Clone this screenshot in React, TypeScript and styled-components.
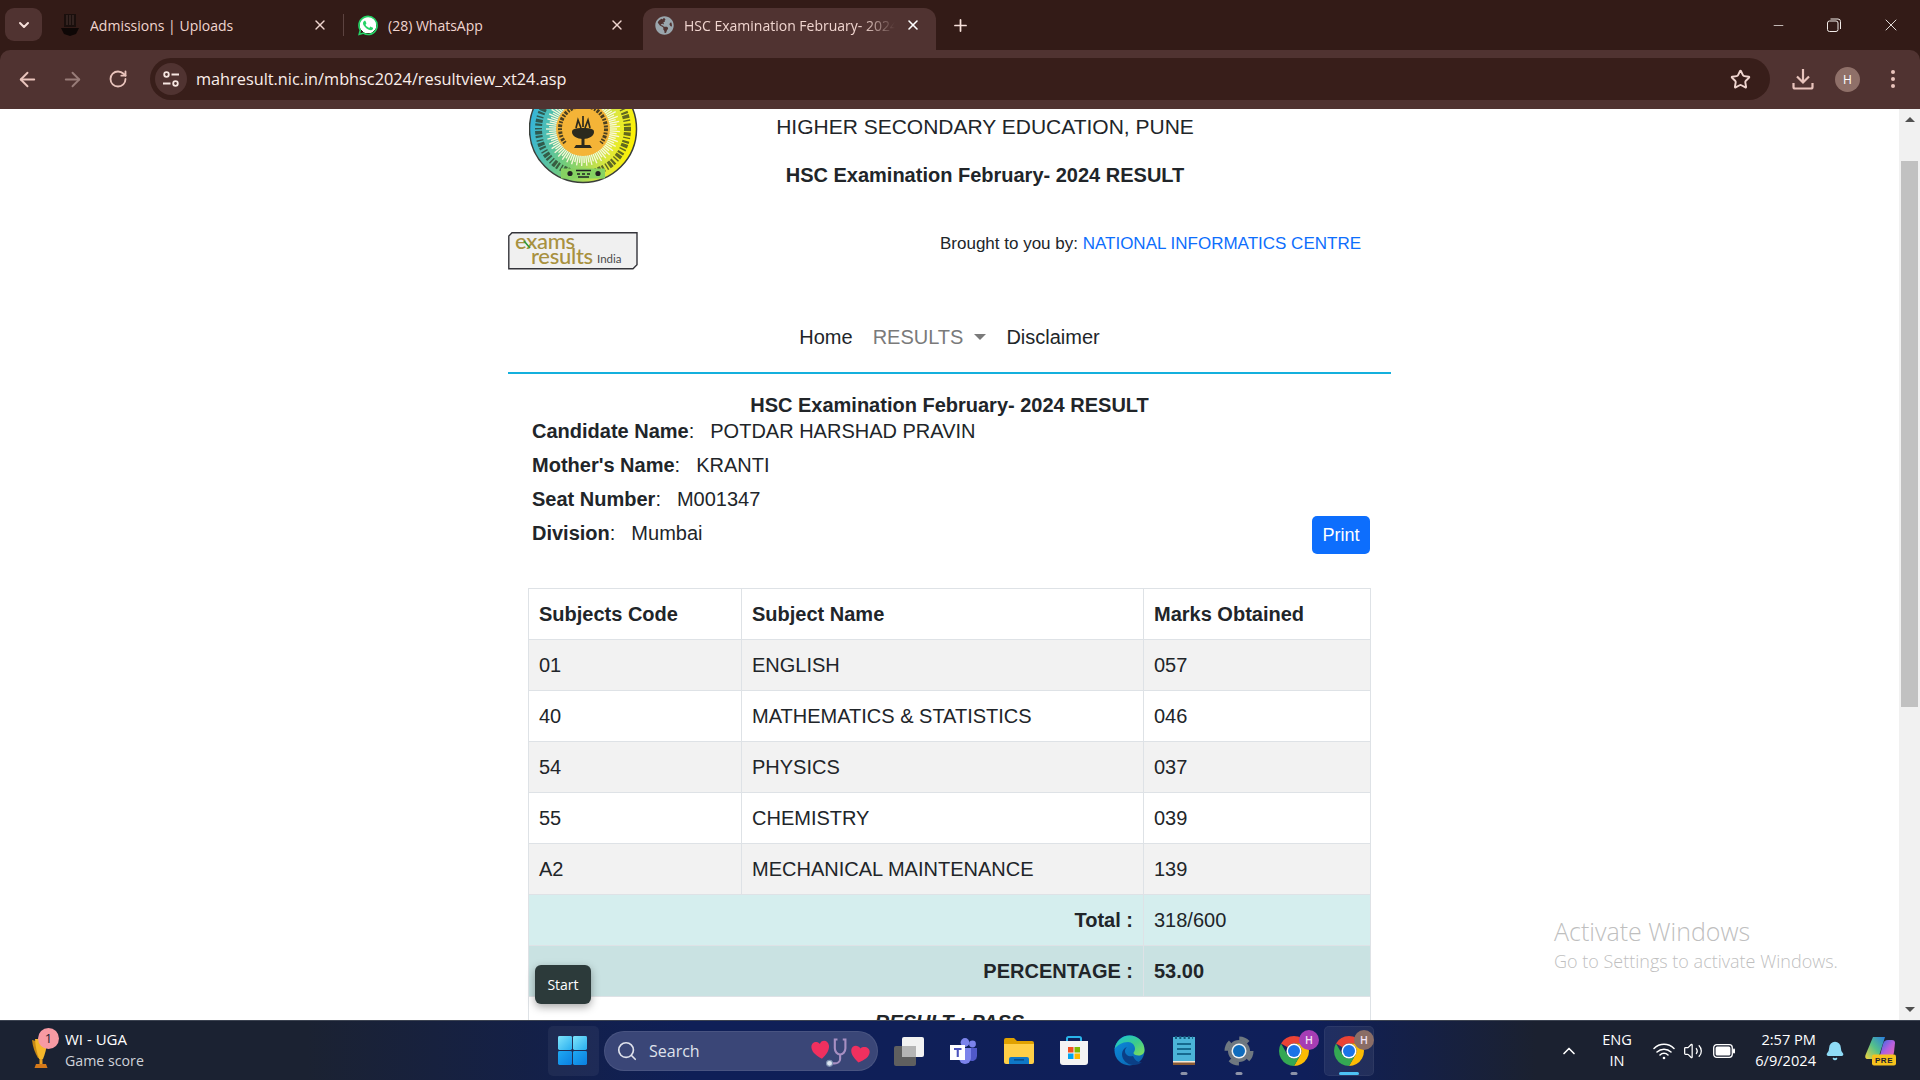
import React from 'react';
import styled, { createGlobalStyle } from 'styled-components';
import { ArrowLeft, ArrowRight, RotateCw, Star, X, Plus, ChevronDown, ChevronUp, Search, Minus, Bell, Volume2 } from 'lucide-react';
import { SiWhatsapp } from 'react-icons/si';
import { FaGlobeAmericas } from 'react-icons/fa';

const Global = createGlobalStyle`
  html, body { margin: 0; padding: 0; overflow: hidden; background: #fff; }
  * { box-sizing: border-box; }
`;

const Screen = styled.div`
  width: 1920px; height: 1080px; display: flex; flex-direction: column; overflow: hidden; background: #331b17;
  font-family: "Liberation Sans", Arial, sans-serif; color: #212529;
`;

/* ---------- browser chrome ---------- */
const TabStrip = styled.div`
  height: 50px; flex: none; display: flex; align-items: flex-end; background: #331b17; padding-left: 5px;
  font-family: "Open Sans", "Noto Sans", sans-serif; color: #f0d5cf;
`;
const TabMenu = styled.div`
  width: 37px; height: 33px; margin: 0 6px 9px 0; border-radius: 9px; background: #503331;
  display: flex; align-items: center; justify-content: center; color: #f6e0da;
`;
const Tab = styled.div<{ $w: number; $pad: number; $active?: boolean; $sep?: boolean }>`
  position: relative; width: ${p => p.$w}px; height: 42px; padding: 0 15px 8px ${p => p.$pad}px; flex: none;
  display: flex; align-items: center; gap: 10px; font-size: 14px;
  margin-left: ${p => (p.$active ? 3 : 0)}px;
  border-radius: 12px 12px 0 0;
  background: ${p => (p.$active ? '#503331' : 'transparent')};
  &::before {
    content: ${p => (p.$sep ? '""' : 'none')}; position: absolute; left: 0; top: 6px; width: 1px; height: 22px; background: #5c4340;
  }
`;
const TabTitle = styled.span<{ $fade?: boolean }>`
  flex: 1; min-width: 0; white-space: nowrap; overflow: hidden;
  ${p => p.$fade && 'mask-image: linear-gradient(90deg,#000 85%,transparent 100%);'}
`;
const FavStack = styled.span`
  width: 20px; height: 20px; flex: none; display: inline-flex; align-items: center; justify-content: center; color: #25d366;
  background: radial-gradient(circle, #fff 58%, transparent 60%);
  border-radius: 50%;
`;
const NewTab = styled.div`
  width: 36px; height: 42px; margin-left: 6px; padding-bottom: 8px; display: flex; align-items: center; justify-content: center; color: #f6e0da;
`;
const WinButtons = styled.div`
  margin-left: auto; height: 50px; display: flex; color: #f2ece9;
`;
const WinBtn = styled.div<{ $w: number }>`
  width: ${p => p.$w}px; display: flex; align-items: center; justify-content: center;
`;
const Toolbar = styled.div`
  height: 59px; flex: none; display: flex; align-items: flex-start; padding: 8px 5px 0; background: #503331;
  border-radius: 10px 10px 0 0; color: #e9c4bc;
`;
const ToolBtn = styled.div`
  width: 45px; height: 42px; flex: none; display: flex; align-items: center; justify-content: center;
`;
const DimBtn = styled(ToolBtn)` color: #987c78; `;
const UrlBar = styled.div`
  width: 1620px; height: 42px; margin: 0 10px; flex: none; border-radius: 21px; background: #381e1a;
  display: flex; align-items: center; padding: 0 19px 0 5px;
  font-family: "Open Sans", "Noto Sans", sans-serif; font-size: 16.3px; color: #fbeeea;
`;
const SiteInfo = styled.div`
  width: 32px; height: 32px; border-radius: 50%; background: #503331; flex: none; margin-right: 9px;
  display: flex; align-items: center; justify-content: center;
`;
const UrlText = styled.span` flex: 1; `;
const Avatar = styled.div`
  width: 25px; height: 25px; border-radius: 50%; background: #8f7069; color: #fff; font-size: 12px;
  display: flex; align-items: center; justify-content: center; font-family: "Open Sans", sans-serif;
`;

/* ---------- page ---------- */
const Viewport = styled.div`
  position: relative; flex: 1; min-height: 0; display: flex; background: #fff;
`;
const PageScroll = styled.div`
  flex: 1; min-width: 0; overflow: hidden; padding-left: 508px;
`;
const Container = styled.div`
  width: 883px; font-size: 20px; line-height: 30px;
`;
const HeadRow = styled.div`
  display: grid; grid-template-columns: 21px 129px 654px; height: 120px;
`;
const Seal = styled.svg` grid-column: 2; display: block; `;
const HeadText = styled.div`
  grid-column: 3; text-align: center; padding-top: 3px; display: flex; flex-direction: column; gap: 18px;
`;
const HeadLine = styled.div` font-size: 21px; `;
const Strong = styled.b` font-weight: 700; `;
const SourceRow = styled.div`
  display: flex; justify-content: space-between; align-items: flex-start; padding-right: 30px; height: 93px;
`;
const ExamsLogo = styled.svg` display: block; margin-top: 3px; `;
const Brought = styled.span` font-size: 17px; `;
const Link = styled.span` color: #0d6efd; `;
const Nav = styled.nav`
  display: flex; justify-content: center; gap: 20px; height: 52px; border-bottom: 2px solid #14b0dd;
`;
const NavItem = styled.span<{ $muted?: boolean }>`
  color: ${p => (p.$muted ? '#7a7a7a' : '#212529')}; display: inline-flex; align-items: center; height: 30px; gap: 11px;
`;
const Caret = styled.i`
  width: 0; height: 0; border-left: 6px solid transparent; border-right: 6px solid transparent; border-top: 6px solid #7a7a7a;
`;
const ResultTitle = styled.div`
  text-align: center; font-weight: 700; line-height: 18px; height: 40px; padding-top: 22px;
`;
const InfoBlock = styled.div`
  display: flex; justify-content: space-between; align-items: flex-end; padding: 0 21px 0 24px;
`;
const InfoList = styled.div` display: flex; flex-direction: column; `;
const InfoRow = styled.div` line-height: 34px; height: 34px; `;
const InfoValue = styled.span` margin-left: 16px; `;
const PrintBtn = styled.button`
  width: 58px; height: 38px; border: 0; border-radius: 5px; background: #0d6efd; color: #fff; margin-bottom: -4px;
  font: 18px "Liberation Sans", Arial, sans-serif; padding: 0;
`;
const Results = styled.table`
  width: 842px; margin: 38px 0 0 20px; border-collapse: collapse; table-layout: fixed;
`;
const Row = styled.tr<{ $bg?: string }>`
  background: ${p => p.$bg || '#fff'}; height: 51px;
`;
const Cell = styled.td<{ $right?: boolean; $bold?: boolean; $center?: boolean; $italic?: boolean }>`
  border: 1px solid #dee2e6; padding: 10px; line-height: 30px;
  text-align: ${p => (p.$right ? 'right' : p.$center ? 'center' : 'left')};
  font-weight: ${p => (p.$bold ? 700 : 400)};
  font-style: ${p => (p.$italic ? 'italic' : 'normal')};
`;
const Scrollbar = styled.div`
  width: 21px; flex: none; background: #f1f1f1; display: flex; flex-direction: column; align-items: center;
`;
const ArrowBox = styled.div`
  width: 21px; height: 21px; flex: none; display: flex; align-items: center; justify-content: center;
`;
const ArrowUp = styled.i`
  width: 0; height: 0; border-left: 5px solid transparent; border-right: 5px solid transparent; border-bottom: 5px solid #505050;
`;
const ArrowDown = styled.i`
  width: 0; height: 0; border-left: 5px solid transparent; border-right: 5px solid transparent; border-top: 5px solid #505050;
`;
const Thumb = styled.div`
  width: 17px; height: 546px; margin-top: 31px; background: #c1c1c1; flex: none;
`;
const Spacer = styled.div` flex: 1; `;
const StartTip = styled.div`
  position: absolute; left: 535px; top: 856px; width: 56px; height: 39px; border-radius: 6px; background: #2c3a3a; color: #fff;
  font: 14px "Open Sans", sans-serif; display: flex; align-items: center; justify-content: center;
  box-shadow: 0 3px 8px rgba(0,0,0,.35);
`;
const Activate = styled.div`
  position: absolute; left: 1554px; top: 804px; color: #bfbfbf; font-family: "Open Sans", sans-serif; font-weight: 300;
`;
const ActivateHead = styled.div` font-size: 25px; line-height: 36px; `;
const ActivateSub = styled.div` font-size: 18px; line-height: 24px; `;

/* ---------- taskbar ---------- */
const Taskbar = styled.div`
  height: 60px; flex: none; display: flex; align-items: center; border-top: 1px solid #3c4351; color: #fff;
  background: linear-gradient(90deg,#1b2232 0,#1b2232 16%,#0f1f57 36%,#0f1f5a 68%,#1b2130 80%,#1b2130 100%);
  font-family: "Open Sans", "Noto Sans", sans-serif;
`;
const Widget = styled.div`
  width: 548px; flex: none; display: flex; align-items: center; padding: 0 0 2px 30px; gap: 2px;
`;
const Trophy = styled.span` position: relative; width: 33px; height: 38px; display: flex; align-items: flex-end; padding-left: 2px; `;
const TrophyBadge = styled.span`
  position: absolute; left: 8px; top: -3px; width: 21px; height: 21px; border-radius: 50%; background: #f79aa3; color: #1b2232;
  font-size: 13px; display: flex; align-items: center; justify-content: center;
`;
const WidgetText = styled.div` display: flex; flex-direction: column; line-height: 21px; `;
const WidgetHead = styled.span` font-size: 15px; `;
const WidgetSub = styled.span` font-size: 14.2px; color: #cfd2d9; `;
const TaskTile = styled.div<{ $on?: boolean; $dot?: string; $dotW?: number }>`
  position: relative; width: 50px; height: 50px; flex: none; border-radius: 5px; display: flex; align-items: center; justify-content: center;
  background: ${p => (p.$on ? 'rgba(255,255,255,.07)' : 'transparent')};
  box-shadow: ${p => (p.$on ? 'inset 0 0 0 1px rgba(255,255,255,.05)' : 'none')};
  &::after {
    content: ${p => (p.$dot ? '""' : 'none')}; position: absolute; left: 50%; transform: translateX(-50%); bottom: 1px;
    width: ${p => p.$dotW || 7}px; height: 3px; border-radius: 2px; background: ${p => p.$dot};
  }
`;
const StartTile = styled(TaskTile)` margin-right: 5px; background: rgba(255,255,255,.05); width: 51px; padding-right: 2px; `;
const SearchPill = styled.div`
  width: 274px; height: 40px; flex: none; margin-right: 6px; border-radius: 20px; display: flex; align-items: center; padding: 0 6px 0 11px; gap: 11px;
  background: #3a4677; border: 1px solid rgba(255,255,255,.08); color: #dfe2ec; font-size: 16px; 
`;
const SearchLabel = styled.span` flex: 1; `;
const TileRow = styled.div` display: flex; gap: 5px; flex: none; `;
const ChromeBadge = styled.span<{ $bg: string }>`
  position: absolute; right: 0; top: 4px; width: 20px; height: 20px; border-radius: 50%; background: ${p => p.$bg};
  font-size: 10.5px; font-weight: 600; display: flex; align-items: center; justify-content: center; color: #f3e3f5;
`;
const Tray = styled.div`
  flex: 1; display: flex; align-items: center; padding-left: 180px;
`;
const TrayItem = styled.div<{ $ml: number; $w: number }>`
  margin-left: ${p => p.$ml}px; width: ${p => p.$w}px; flex: none; display: flex; align-items: center; justify-content: center;
`;
const TrayText = styled.div<{ $ml: number; $w: number; $align: string }>`
  margin-left: ${p => p.$ml}px; width: ${p => p.$w}px; flex: none; font-size: 14.6px; line-height: 21px; white-space: nowrap; padding-bottom: 2px;
  display: flex; flex-direction: column; align-items: ${p => (p.$align === 'right' ? 'flex-end' : 'center')};
`;

/* ---------- drawings ---------- */
const ChromeGlyph = ({ size }: { size: number }) => (
  <svg width={size} height={size} viewBox="4 4 40 40">
    <path fill="#ea4335" d="M24 4a20 20 0 0 1 17.32 10H24a10 10 0 0 0-8.66 5L6.68 14A20 20 0 0 1 24 4z" />
    <path fill="#fbbc04" d="M41.32 14A20 20 0 0 1 24 44l8.66-15A10 10 0 0 0 24 14z" />
    <path fill="#34a853" d="M6.68 14A20 20 0 0 0 24 44l8.66-15a10 10 0 0 1-17.32 0z" />
    <circle cx="24" cy="24" r="10" fill="#fff" />
    <circle cx="24" cy="24" r="8" fill="#1a73e8" />
  </svg>
);

const SealLogo = () => {
  const rays = Array.from({ length: 90 }, (_, i) => i * 4);
  return (
    <Seal width="109" height="75" viewBox="0 0 109 75">
      <defs>
        <linearGradient id="ring" x1="0" x2="1" y1="0.3" y2="0.5">
          <stop offset="0" stopColor="#2fb2e2" />
          <stop offset="0.45" stopColor="#79cf73" />
          <stop offset="0.8" stopColor="#dfe83c" />
          <stop offset="1" stopColor="#fff200" />
        </linearGradient>
      </defs>
      <g transform="translate(54 20)">
        <circle r="53.5" fill="url(#ring)" stroke="#3a3f3a" strokeWidth="1.5" />
        <circle r="44.500" fill="none" stroke="#25301f" strokeWidth="7" strokeDasharray="2.200 1.100 3.400 1.600 1.400 2.200" opacity="0.7" />
        {rays.map((a, i) => (
          <line key={a} x1="24" x2={i % 2 ? 37 : 34} y1="0" y2="0" stroke="#fbf7dc" strokeWidth="1.300" transform={`rotate(${a})`} />
        ))}
        <circle r="27" fill="#f4b437" />
        <path d="M-18 14A23 23 0 1 1 18 14" fill="none" stroke="#2c2a1c" strokeWidth="4" strokeDasharray="1.800 1.200 2.600 1.400" opacity=".85" />
        <path d="M-11 3c0-3 3-4 11-4s11 1 11 4c0 4-5 7-11 7s-11-3-11-7z" fill="#2b2a1d" />
        <path d="M-7 16h14l2 3h-18z" fill="#2b2a1d" />
        <rect x="-1.500" y="9" width="3" height="8" fill="#2b2a1d" />
        <path d="M-7 -1 l2 -8 3 8M0 -2 V-13M7 -1 l-2 -8 -3 8" stroke="#2b2a1d" strokeWidth="1.700" fill="none" />
        <rect x="-22" y="39.500" width="44" height="10" fill="#86d262" />
        <circle cx="-13" cy="44.500" r="2.600" fill="#222" />
        <circle cx="15" cy="44.500" r="2.600" fill="#222" />
        <path d="M-7 41.500h15M-6 45h3M-1 45h3M4 45h3M-5 48h11" stroke="#222" strokeWidth="1.400" />
      </g>
    </Seal>
  );
};

const ExamsResults = () => (
  <ExamsLogo width="130" height="38" viewBox="0 0 130 38">
    <path d="M4 .8h125v32l-4 4H.8V4z" fill="#f0f0f0" stroke="#34343a" strokeWidth="1.400" />
    <text x="7" y="17" fontFamily="Lato, sans-serif" fontSize="22" fontWeight="500" fill="#a8913f" letterSpacing="-.3">exams</text>
    <text x="23" y="31.500" fontFamily="Lato, sans-serif" fontSize="22" fontWeight="500" fill="#a8913f" letterSpacing="-.3">results</text>
    <path d="M16 9l6 7" stroke="#2f9a3a" strokeWidth="1.600" />
    <text x="89" y="30.500" fontFamily="Lato, sans-serif" fontSize="11.500" fill="#4a4a4a">India</text>
  </ExamsLogo>
);

const TaskView = () => (
  <svg width="32" height="30" viewBox="0 0 32 30">
    <rect x="1" y="10" width="22" height="20" rx="2" fill="#5f5f5f" />
    <rect x="9" y="1" width="22" height="20" rx="2" fill="#f2f2f2" />
    <rect x="9" y="10" width="14" height="11" fill="#b5b5b5" />
  </svg>
);
const Teams = () => (
  <svg width="28" height="26" viewBox="0 0 28 26">
    <circle cx="22.500" cy="6" r="3.400" fill="#7b83eb" />
    <circle cx="15" cy="4.500" r="4.400" fill="#7b83eb" />
    <path d="M19 10h8v8a5 5 0 0 1-8 4z" fill="#5059c9" />
    <path d="M9 10h12v10a6 6 0 0 1-12 0z" fill="#7b83eb" />
    <rect x="0" y="7" width="15" height="15" fill="#fff" />
    <path d="M4 10h7.500v2H8.800v7H6.700v-7H4z" fill="#4b53bc" />
  </svg>
);
const Explorer = () => (
  <svg width="30" height="27" viewBox="0 0 30 27">
    <path d="M0 3a2 2 0 0 1 2-2h8l3 3h15a2 2 0 0 1 2 2v4H0z" fill="#e0a100" />
    <path d="M0 7h30v18a2 2 0 0 1-2 2H2a2 2 0 0 1-2-2z" fill="#ffcf47" />
    <path d="M5 27v-5a2 2 0 0 1 2-2h16a2 2 0 0 1 2 2v5z" fill="#0f78c8" />
    <rect x="10" y="22" width="10" height="1.600" fill="#0a4f8a" />
  </svg>
);
const Store = () => (
  <svg width="30" height="30" viewBox="0 0 30 30">
    <path d="M8 6V2.500A1.500 1.500 0 0 1 9.500 1h11A1.500 1.500 0 0 1 22 2.500V6" fill="none" stroke="#29b3ea" strokeWidth="2" />
    <path d="M1 5h28v21a3 3 0 0 1-3 3H4a3 3 0 0 1-3-3z" fill="#f4f4f4" />
    <rect x="9" y="11" width="5.500" height="5.500" fill="#f25022" />
    <rect x="15.500" y="11" width="5.500" height="5.500" fill="#7fba00" />
    <rect x="9" y="17.500" width="5.500" height="5.500" fill="#00a4ef" />
    <rect x="15.500" y="17.500" width="5.500" height="5.500" fill="#ffb900" />
  </svg>
);
const Edge = () => (
  <svg width="31" height="31" viewBox="0 0 31 31">
    <defs>
      <linearGradient id="edgeA" x1="0" y1="0" x2="1" y2="1">
        <stop offset="0" stopColor="#19c3d8" />
        <stop offset=".55" stopColor="#3ccb8c" />
        <stop offset="1" stopColor="#84e05a" />
      </linearGradient>
      <linearGradient id="edgeB" x1="0" y1="0" x2="1" y2="1">
        <stop offset="0" stopColor="#0c8ee0" />
        <stop offset="1" stopColor="#0a5fa8" />
      </linearGradient>
    </defs>
    <circle cx="15.500" cy="15.500" r="15" fill="url(#edgeB)" />
    <path d="M.7 14C2 6 8 .5 15.500 .5 24 .5 30.500 7 30.500 15c0 3-2 5.500-6 5.500-3 0-5-1-5-2.500 0-1 1.500-2 1.500-4 0-4-3-7-7-7-6 0-10 3-13.800 7z" fill="url(#edgeA)" />
    <path d="M19 21c-4 1-8-1-8-5 0-2 1-3 2-4-3 1-5 4-5 7 0 6 5 11 12 11 3 0 6-1 8-3-3 1-7-1-9-6z" fill="#0b3f86" />
  </svg>
);
const Notepad = () => (
  <svg width="22" height="30" viewBox="0 0 22 30">
    <rect y="1" width="22" height="26" fill="#4bb4d8" />
    <rect y="26" width="22" height="3" fill="#8a5a33" />
    <rect y="25" width="22" height="1.500" fill="#f3e7d8" />
    <path d="M2 1.500h18" stroke="#155e80" strokeWidth="3" strokeDasharray="2 2.300" />
    <path d="M4 8h14M4 13h14M4 18h14" stroke="#166a8f" strokeWidth="2" />
  </svg>
);
const Gear = () => (
  <svg width="30" height="30" viewBox="0 0 30 30">
    <circle cx="15" cy="15" r="11" fill="#6f7880" />
    <circle cx="15" cy="15" r="12.500" fill="none" stroke="#6f7880" strokeWidth="4" strokeDasharray="9.800 9.800" />
    <circle cx="15" cy="15" r="7.500" fill="#eef1f3" />
    <circle cx="15" cy="15" r="6" fill="#0f6cbd" />
  </svg>
);
const WinLogo = () => (
  <svg width="29" height="29" viewBox="0 0 30 30">
    <defs>
      <linearGradient id="winT" x1="0" y1="0" x2="1" y2="1"><stop offset="0" stopColor="#7fe4fb" /><stop offset="1" stopColor="#27aef0" /></linearGradient>
      <linearGradient id="winB" x1="0" y1="0" x2="1" y2="1"><stop offset="0" stopColor="#1fa8f2" /><stop offset="1" stopColor="#0a7fe0" /></linearGradient>
    </defs>
    <rect x="0" y="0" width="14.500" height="14.500" rx="1.500" fill="url(#winT)" />
    <rect x="15.500" y="0" width="14.500" height="14.500" rx="1.500" fill="url(#winT)" />
    <rect x="0" y="15.500" width="14.500" height="14.500" rx="1.500" fill="url(#winB)" />
    <rect x="15.500" y="15.500" width="14.500" height="14.500" rx="1.500" fill="url(#winB)" />
  </svg>
);
const HeartsScope = () => (
  <svg width="60" height="32" viewBox="0 0 68 36">
    <path d="M11 27C3 21 1 17 1 13c0-6 7-8 10-3 2-5 10-4 10 3 0 5-4 10-10 14z" fill="#f0305f" transform="rotate(-8 11 17)" />
    <path d="M55 31c-7-5-10-9-10-13 0-6 7-7 10-3 3-4 11-3 11 3 0 5-4 9-11 13z" fill="#f0305f" transform="rotate(8 55 22)" />
    <path d="M30 5h-3v10c0 4 3 7 6 7s6-3 6-7V5h-3" fill="none" stroke="#a78fc2" strokeWidth="2.400" />
    <path d="M33 22v5c0 3-3 5-6 5h-4" fill="none" stroke="#a78fc2" strokeWidth="2.400" />
    <circle cx="21" cy="32" r="3.400" fill="#dce6f2" stroke="#7c8fb0" strokeWidth="1.200" />
  </svg>
);
const TrophyIcon = () => (
  <svg width="16" height="31" viewBox="0 0 16 31">
    <path d="M0 2l4 1 3 17H6C3 15 .7 9 0 2z" fill="#c98a14" />
    <path d="M3 1h12c0 9-2 15-4 20H7C5 15 3.500 9 3 1z" fill="#f5b72a" />
    <path d="M7.500 21h3v5h-3z" fill="#e8a020" />
    <path d="M4 26h10l1.500 4H2.500z" fill="#d5791a" />
  </svg>
);
const WifiIcon = () => (
  <svg width="22" height="18" viewBox="0 0 22 18" fill="none" stroke="#fff" strokeWidth="1.500" strokeLinecap="round">
    <path d="M1 6.500a14 14 0 0 1 20 0M4 10a10 10 0 0 1 14 0M7 13a5.500 5.500 0 0 1 8 0" />
    <circle cx="11" cy="16" r="1.300" fill="#fff" stroke="none" />
  </svg>
);
const BatteryIcon = () => (
  <svg width="22" height="14" viewBox="0 0 22 14">
    <rect x=".7" y=".7" width="18.600" height="12.600" rx="3" fill="none" stroke="#fff" strokeWidth="1.300" />
    <rect x="2.600" y="2.600" width="14.800" height="8.800" rx="1.500" fill="#fff" />
    <rect x="20" y="4.500" width="2" height="5" rx="1" fill="#fff" />
  </svg>
);
const Copilot = () => (
  <svg width="31" height="30" viewBox="0 0 31 30">
    <defs>
      <linearGradient id="copA" x1="0" y1="1" x2="1" y2="0"><stop offset="0" stopColor="#f4d43c" /><stop offset=".5" stopColor="#54c08a" /><stop offset="1" stopColor="#2a7de1" /></linearGradient>
      <linearGradient id="copB" x1="0" y1="0" x2="1" y2="1"><stop offset="0" stopColor="#1f6fe0" /><stop offset=".5" stopColor="#b45fe0" /><stop offset="1" stopColor="#f06aa8" /></linearGradient>
    </defs>
    <path d="M8 1h12l-7 22H3C0 23 0 21 .5 19z" fill="url(#copA)" />
    <path d="M14 23L18 8c1-3 2-4 5-4h4c2 0 3 1 3 3l-1 9c-.5 4-3 7-7 7z" fill="url(#copB)" />
    <rect x="7" y="18.500" width="24" height="11" rx="2" fill="#f6c21c" />
    <text x="19" y="27.200" textAnchor="middle" fontFamily="Liberation Sans, sans-serif" fontWeight="700" fontSize="8" letterSpacing=".6" fill="#1b2130">PRE</text>
  </svg>
);
const Shield = () => (
  <svg width="20" height="24" viewBox="0 0 20 24">
    <path d="M4 1h12v13H4z" fill="#1a0f0d" />
    <path d="M7 2v10M10 2v10M13 2v10" stroke="#4a3632" strokeWidth="1" />
    <path d="M1 15h18l-3 6-6 2-6-2z" fill="#0e0706" />
  </svg>
);
const Tune = () => (
  <svg width="18" height="18" viewBox="0 0 18 18" fill="none" stroke="#f6e6e1" strokeWidth="1.800">
    <circle cx="4.500" cy="4.500" r="2.300" />
    <path d="M9.500 4.500H17M1 13.500h7.500" />
    <circle cx="13.500" cy="13.500" r="2.300" />
  </svg>
);
const DownloadIcon = () => (
  <svg width="22" height="22" viewBox="0 0 22 22" fill="none" stroke="#e9c4bc" strokeWidth="2.200">
    <path d="M11 1v13M5 8.500l6 6 6-6" />
    <path d="M1.500 15v4a1.500 1.500 0 0 0 1.500 1.500h16a1.500 1.500 0 0 0 1.500-1.500v-4" />
  </svg>
);
const RestoreIcon = () => (
  <svg width="14" height="14" viewBox="0 0 14 14" fill="none" stroke="#f2ece9" strokeWidth="1">
    <rect x=".5" y="3" width="10.500" height="10.500" rx="2" />
    <path d="M3.500 1h7.500a2.500 2.500 0 0 1 2.500 2.500V11" />
  </svg>
);
const KebabIcon = () => (
  <svg width="6" height="20" viewBox="0 0 6 20" fill="#e9c4bc">
    <circle cx="3" cy="3" r="2" /><circle cx="3" cy="10" r="2" /><circle cx="3" cy="17" r="2" />
  </svg>
);

const subjects = [
  ['01', 'ENGLISH', '057'],
  ['40', 'MATHEMATICS & STATISTICS', '046'],
  ['54', 'PHYSICS', '037'],
  ['55', 'CHEMISTRY', '039'],
  ['A2', 'MECHANICAL MAINTENANCE', '139'],
];

export default function App() {
  return (
    <Screen>
      <Global />
      <TabStrip>
        <TabMenu><ChevronDown size={16} strokeWidth={3} /></TabMenu>
        <Tab $w={295} $pad={12}>
          <Shield />
          <TabTitle>Admissions | Uploads</TabTitle>
          <X size={16} strokeWidth={2} />
        </Tab>
        <Tab $w={297} $pad={15} $sep>
          <FavStack><SiWhatsapp size={21} /></FavStack>
          <TabTitle>(28) WhatsApp</TabTitle>
          <X size={16} strokeWidth={2} />
        </Tab>
        <Tab $w={293} $pad={12} $active>
          <FaGlobeAmericas size={19} color="#9aa6ad" />
          <TabTitle $fade>HSC Examination February- 2024 RESULT</TabTitle>
          <X size={16} strokeWidth={2.4} color="#fff" />
        </Tab>
        <NewTab><Plus size={19} strokeWidth={2.2} /></NewTab>
        <WinButtons>
          <WinBtn $w={56}><Minus size={15} strokeWidth={1.2} /></WinBtn>
          <WinBtn $w={56}><RestoreIcon /></WinBtn>
          <WinBtn $w={58}><X size={20} strokeWidth={1.1} /></WinBtn>
        </WinButtons>
      </TabStrip>
      <Toolbar>
        <ToolBtn><ArrowLeft size={23} strokeWidth={2} /></ToolBtn>
        <DimBtn><ArrowRight size={23} strokeWidth={2} /></DimBtn>
        <ToolBtn><RotateCw size={20} strokeWidth={2.2} /></ToolBtn>
        <UrlBar>
          <SiteInfo><Tune /></SiteInfo>
          <UrlText>mahresult.nic.in/mbhsc2024/resultview_xt24.asp</UrlText>
          <Star size={21} strokeWidth={2.2} color="#f0d5cf" />
        </UrlBar>
        <ToolBtn><DownloadIcon /></ToolBtn>
        <ToolBtn><Avatar>H</Avatar></ToolBtn>
        <ToolBtn><KebabIcon /></ToolBtn>
      </Toolbar>

      <Viewport>
        <PageScroll>
          <Container>
            <HeadRow>
              <SealLogo />
              <HeadText>
                <HeadLine>HIGHER SECONDARY EDUCATION, PUNE</HeadLine>
                <Strong>HSC Examination February- 2024 RESULT</Strong>
              </HeadText>
            </HeadRow>
            <SourceRow>
              <ExamsResults />
              <Brought>Brought to you by: <Link>NATIONAL INFORMATICS CENTRE</Link></Brought>
            </SourceRow>
            <Nav>
              <NavItem>Home</NavItem>
              <NavItem $muted>RESULTS<Caret /></NavItem>
              <NavItem>Disclaimer</NavItem>
            </Nav>
            <ResultTitle>HSC Examination February- 2024 RESULT</ResultTitle>
            <InfoBlock>
              <InfoList>
                <InfoRow><Strong>Candidate Name</Strong>:<InfoValue>POTDAR HARSHAD PRAVIN</InfoValue></InfoRow>
                <InfoRow><Strong>Mother's Name</Strong>:<InfoValue>KRANTI</InfoValue></InfoRow>
                <InfoRow><Strong>Seat Number</Strong>:<InfoValue>M001347</InfoValue></InfoRow>
                <InfoRow><Strong>Division</Strong>:<InfoValue>Mumbai</InfoValue></InfoRow>
              </InfoList>
              <PrintBtn>Print</PrintBtn>
            </InfoBlock>
            <Results>
              <colgroup>
                <col width="213" />
                <col width="402" />
                <col width="227" />
              </colgroup>
              <tbody>
                <Row>
                  <Cell $bold>Subjects Code</Cell>
                  <Cell $bold>Subject Name</Cell>
                  <Cell $bold>Marks Obtained</Cell>
                </Row>
                {subjects.map((s, i) => (
                  <Row key={s[0]} $bg={i % 2 === 0 ? '#f2f2f2' : '#fff'}>
                    <Cell>{s[0]}</Cell>
                    <Cell>{s[1]}</Cell>
                    <Cell>{s[2]}</Cell>
                  </Row>
                ))}
                <Row $bg="#d5eeee">
                  <Cell colSpan={2} $right $bold>Total :</Cell>
                  <Cell>318/600</Cell>
                </Row>
                <Row $bg="#c9e2e2">
                  <Cell colSpan={2} $right $bold>PERCENTAGE :</Cell>
                  <Cell $bold>53.00</Cell>
                </Row>
                <Row>
                  <Cell colSpan={3} $center $bold $italic>RESULT : PASS</Cell>
                </Row>
              </tbody>
            </Results>
          </Container>
        </PageScroll>
        <Scrollbar>
          <ArrowBox><ArrowUp /></ArrowBox>
          <Thumb />
          <Spacer />
          <ArrowBox><ArrowDown /></ArrowBox>
        </Scrollbar>
        <StartTip>Start</StartTip>
        <Activate>
          <ActivateHead>Activate Windows</ActivateHead>
          <ActivateSub>Go to Settings to activate Windows.</ActivateSub>
        </Activate>
      </Viewport>

      <Taskbar>
        <Widget>
          <Trophy>
            <TrophyIcon />
            <TrophyBadge>1</TrophyBadge>
          </Trophy>
          <WidgetText>
            <WidgetHead>WI - UGA</WidgetHead>
            <WidgetSub>Game score</WidgetSub>
          </WidgetText>
        </Widget>
        <StartTile><WinLogo /></StartTile>
        <SearchPill>
          <Search size={22} strokeWidth={1.8} />
          <SearchLabel>Search</SearchLabel>
          <HeartsScope />
        </SearchPill>
        <TileRow>
          <TaskTile><TaskView /></TaskTile>
          <TaskTile><Teams /></TaskTile>
          <TaskTile><Explorer /></TaskTile>
          <TaskTile><Store /></TaskTile>
          <TaskTile><Edge /></TaskTile>
          <TaskTile $dot="#8d93a8"><Notepad /></TaskTile>
          <TaskTile $dot="#8d93a8"><Gear /></TaskTile>
          <TaskTile $dot="#8d93a8">
            <ChromeGlyph size={30} />
            <ChromeBadge $bg="#a63db4">H</ChromeBadge>
          </TaskTile>
          <TaskTile $on $dot="#4dc2f5" $dotW={20}>
            <ChromeGlyph size={30} />
            <ChromeBadge $bg="#8a6d66">H</ChromeBadge>
          </TaskTile>
        </TileRow>
        <Tray>
          <TrayItem $ml={0} $w={30}><ChevronUp size={20} strokeWidth={2} /></TrayItem>
          <TrayText $ml={13} $w={40} $align="center"><span>ENG</span><span>IN</span></TrayText>
          <TrayItem $ml={15} $w={24}><WifiIcon /></TrayItem>
          <TrayItem $ml={6} $w={22}><Volume2 size={20} strokeWidth={1.5} /></TrayItem>
          <TrayItem $ml={8} $w={24}><BatteryIcon /></TrayItem>
          <TrayText $ml={19} $w={61} $align="right"><span>2:57 PM</span><span>6/9/2024</span></TrayText>
          <TrayItem $ml={8} $w={22}><Bell size={20} fill="#8fdcf7" color="#8fdcf7" /></TrayItem>
          <TrayItem $ml={19} $w={31}><Copilot /></TrayItem>
        </Tray>
      </Taskbar>
    </Screen>
  );
}
